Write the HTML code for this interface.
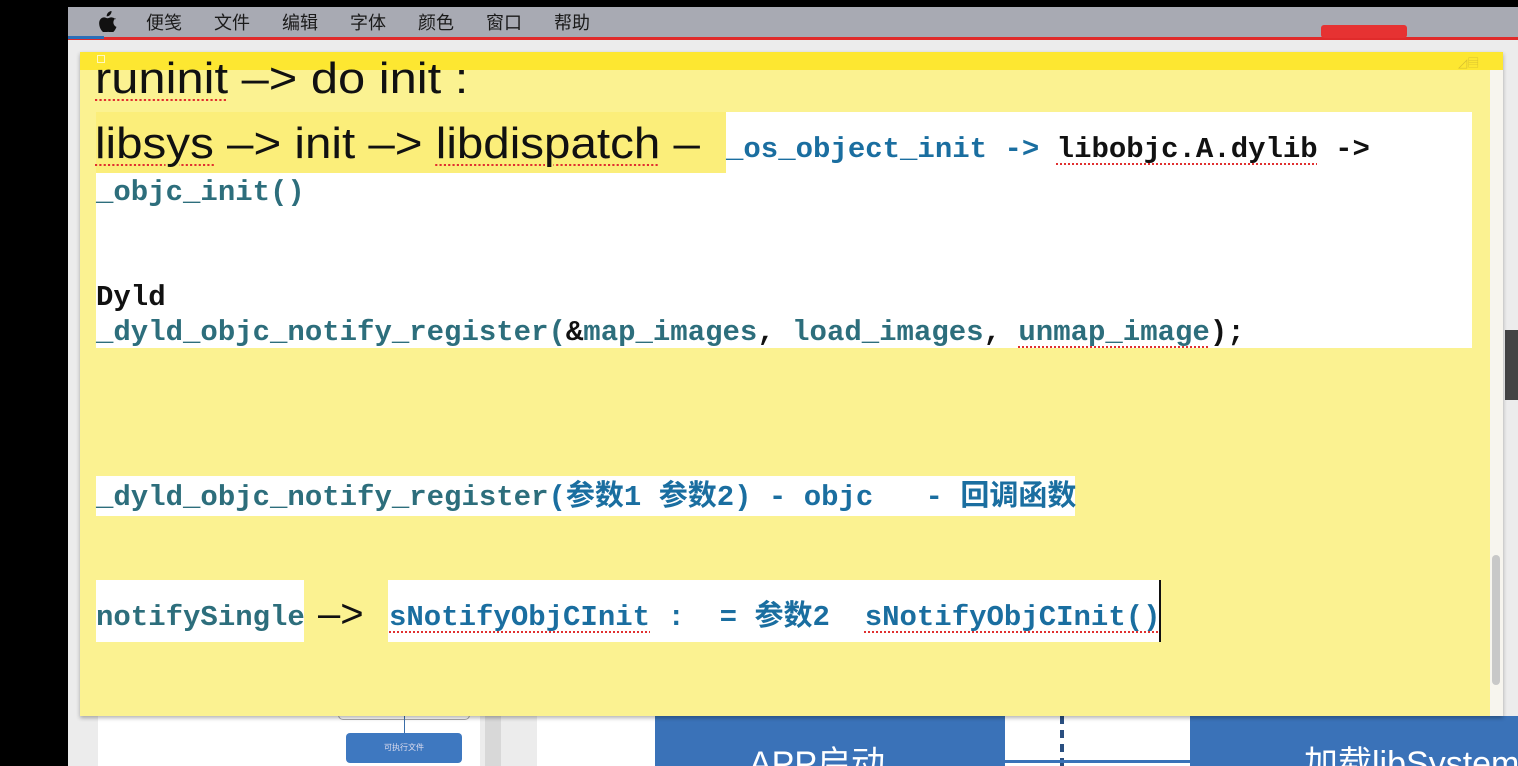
<!DOCTYPE html>
<html><head><meta charset="utf-8"><style>
*{margin:0;padding:0;box-sizing:border-box}
html,body{width:1518px;height:766px;overflow:hidden}
body{background:#000;position:relative;font-family:"Liberation Sans","Noto Sans CJK SC",sans-serif}
.a{position:absolute}
.mono{font-family:"Liberation Mono","Noto Sans CJK SC",monospace;font-weight:bold;font-size:29px;white-space:pre;line-height:1}
.sq{text-decoration:underline dotted #e03030;text-underline-offset:6px;text-decoration-thickness:2px}
.m{position:absolute;top:11px;font-size:18px;color:#1a1a1a;font-family:"Noto Sans CJK SC",sans-serif;line-height:22px}
</style></head><body>
<div class="a" style="left:68px;top:7px;width:1450px;height:759px;background:#ececec"></div>
<div class="a" style="left:68px;top:7px;width:1450px;height:31px;background:#a8aab3"></div>
<div class="a" style="left:68px;top:37px;width:1450px;height:3px;background:#e02b2b"></div>
<div class="a" style="left:68px;top:36px;width:36px;height:3px;background:#2a6fb8"></div>
<svg class="a" style="left:99px;top:11px" width="18" height="21" viewBox="0 0 18 21"><path d="M12.5 0c.2 1.6-.5 3-1.4 3.9-.9 1-2.2 1.6-3.4 1.5-.2-1.5.5-2.9 1.4-3.8C10 .7 11.4.1 12.5 0zM16.8 7.2c-1.7 1-2.5 2.6-2.4 4.4.1 2 1.3 3.6 3.1 4.3-.4 1.2-1 2.4-1.8 3.5-.9 1.2-1.800 2.3-3.200 2.300-1.400 0-1.800-.8-3.400-.8s-2.100.8-3.400.8C4.300 21.700 3.300 20.500 2.400 19.300.5 16.600-.8 12 1 8.900c.9-1.600 2.500-2.500 4.200-2.500 1.300 0 2.600.9 3.400.9.800 0 2.300-1.100 3.900-.9.700 0 2.700.3 4.300 2.100z" fill="#111"/></svg>
<div class="m" style="left:146px">便笺</div>
<div class="m" style="left:214px">文件</div>
<div class="m" style="left:282px">编辑</div>
<div class="m" style="left:350px">字体</div>
<div class="m" style="left:418px">颜色</div>
<div class="m" style="left:486px">窗口</div>
<div class="m" style="left:554px">帮助</div>
<div class="a" style="left:1321px;top:25px;width:86px;height:13px;background:#e63232;border-radius:3px"></div>
<!-- bottom background -->
<div class="a" style="left:98px;top:716px;width:382px;height:50px;background:#fff"></div>
<div class="a" style="left:338px;top:706px;width:132px;height:14px;border:1px solid #aaa;border-radius:5px;background:#fff"></div>
<div class="a" style="left:404px;top:716px;width:1px;height:18px;background:#3a6ea8"></div>
<div class="a" style="left:346px;top:733px;width:116px;height:30px;background:#3e78c0;border-radius:4px;color:#dde;font-size:8px;text-align:center;line-height:30px">可执行文件</div>
<div class="a" style="left:485px;top:716px;width:16px;height:50px;background:#d8d8d8"></div>
<div class="a" style="left:537px;top:716px;width:981px;height:50px;background:#fff"></div>
<div class="a" style="left:655px;top:716px;width:350px;height:50px;background:#3a72b8;overflow:hidden"><div style="position:absolute;left:94px;top:28px;color:#fff;font-size:34px;line-height:40px;white-space:nowrap">APP启动</div></div>
<div class="a" style="left:1060px;top:716px;width:4px;height:50px;background:repeating-linear-gradient(#2a4f80 0 8px,transparent 8px 14px)"></div>
<div class="a" style="left:1005px;top:760px;width:185px;height:3px;background:#3a72b8"></div>
<div class="a" style="left:1190px;top:716px;width:328px;height:50px;background:#3a72b8;overflow:hidden"><div style="position:absolute;left:114px;top:28px;color:#fff;font-size:34px;line-height:40px;white-space:nowrap">加载libSystem</div></div>
<div class="a" style="left:1505px;top:330px;width:13px;height:70px;background:#444"></div>
<!-- sticky note -->
<div class="a" style="left:80px;top:52px;width:1423px;height:664px;background:#fbf291;box-shadow:0 2px 4px rgba(0,0,0,.3)"></div>
<div class="a" style="left:80px;top:52px;width:1423px;height:18px;background:#fde731"></div>
<div class="a" style="left:97px;top:55px;width:8px;height:8px;border:1px solid #fff8c0"></div>
<div class="a" style="left:1458px;top:54px;font-size:12px;color:#d8c030">◿▤</div>
<div class="a" style="left:1490px;top:70px;width:13px;height:646px;background:#f7f5ee"></div>
<div class="a" style="left:1492px;top:555px;width:8px;height:130px;background:#c8c8c8;border-radius:4px"></div>
<!-- highlights -->
<div class="a" style="left:96px;top:112px;width:630px;height:61px;background:#fbee7a"></div>
<div class="a" style="left:726px;top:112px;width:746px;height:62px;background:#fff"></div>
<div class="a" style="left:96px;top:173px;width:1376px;height:175px;background:#fff"></div>
<div class="a" style="left:96px;top:476px;width:979px;height:40px;background:#fff"></div>
<div class="a" style="left:96px;top:580px;width:208px;height:62px;background:#fff"></div>
<div class="a" style="left:388px;top:580px;width:772px;height:62px;background:#fff"></div>
<div class="a" style="left:1159px;top:580px;width:2px;height:62px;background:#111"></div>
<!-- text -->
<div class="a" style="left:95px;top:54px;font-size:44px;color:#111;white-space:pre;line-height:50px;transform:scaleX(1.11);transform-origin:0 0"><span class="sq">runinit</span> –&gt; do init :</div>
<div class="a" style="left:95px;top:118px;font-size:44px;color:#111;white-space:pre;line-height:52px;transform:scaleX(1.08);transform-origin:0 0"><span class="sq">libsys</span> –&gt; init –&gt; <span class="sq">libdispatch</span> –</div>
<div class="a mono" style="left:726px;top:135px;color:#1a6ea0"><span>_os_object_init -&gt;</span> <span class="sq" style="color:#111">libobjc.A.dylib</span><span style="color:#111"> -&gt;</span></div>
<div class="a mono" style="left:96px;top:178px;color:#2d6e7c">_objc_init()</div>
<div class="a mono" style="left:96px;top:283px;color:#111">Dyld</div>
<div class="a mono" style="left:96px;top:318px;color:#2d6e7c">_dyld_objc_notify_register(<span style="color:#111">&amp;</span>map_images<span style="color:#111">,</span> load_images<span style="color:#111">,</span> <span class="sq">unmap_image</span><span style="color:#111">);</span></div>
<div class="a mono" style="left:96px;top:483px;color:#1a6ea0"><span style="color:#2d6e7c">_dyld_objc_notify_register</span>(参数1 参数2) - objc   - 回调函数</div>
<div class="a mono" style="left:96px;top:603px;color:#2d6e7c">notifySingle</div>
<div class="a" style="left:318px;top:591px;font-size:40px;color:#111;line-height:46px">–&gt;</div>
<div class="a mono" style="left:389px;top:603px;color:#1a6ea0"><span class="sq">sNotifyObjCInit</span> :  = 参数2  <span class="sq">sNotifyObjCInit()</span></div>
</body></html>
